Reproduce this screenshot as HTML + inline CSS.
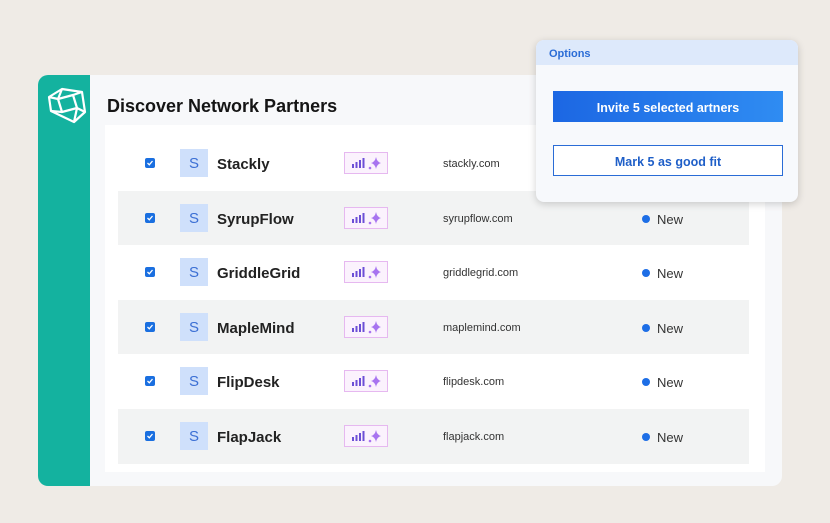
<!DOCTYPE html>
<html><head><style>
*{margin:0;padding:0;box-sizing:border-box}
body{width:830px;height:523px;background:#efebe6;font-family:"Liberation Sans",sans-serif;position:relative;overflow:hidden}
.card{position:absolute;left:38px;top:75px;width:744px;height:411px;background:#f7f8fa;border-radius:10px;overflow:hidden}
.side{position:absolute;left:0;top:0;width:52px;height:100%;background:#14b29f}
h1{position:absolute;left:107px;top:96px;font-size:18px;font-weight:bold;color:#151515}
.panel{position:absolute;left:105px;top:125px;width:660px;height:347px;background:#fff}
.row{position:absolute;left:118px;width:631px;height:54.6px}
.row.g{background:#f2f3f3}
.cb{position:absolute;left:27px;top:22px;width:10px;height:10px;background:#1a6fe0;border-radius:2px}
.cb svg{position:absolute;left:1px;top:1px}
.av{position:absolute;left:62px;top:13px;width:28px;height:28px;background:#cfe0fb;color:#3b6fd4;font-size:15px;text-align:center;line-height:30px}
.nm{position:absolute;left:99px;top:20px;font-size:15px;font-weight:bold;color:#222}
.bd{position:absolute;left:226px;top:16px;width:44px;height:22px;border:1px solid #e6b8f0;background:#fbf2fd}
.dm{position:absolute;left:325px;top:22px;font-size:11px;color:#333}
.nw{position:absolute;left:524px;top:21px;font-size:13px;color:#333}
.nw:before{content:"";display:inline-block;width:8px;height:8px;border-radius:50%;background:#1d6ee6;margin-right:7px;vertical-align:1px}
.pop{position:absolute;left:536px;top:40px;width:262px;height:162px;background:#f7f9fc;border-radius:8px;box-shadow:0 2px 8px rgba(0,0,0,.18);overflow:hidden}
.ph{height:25px;background:#dde9fb;color:#2a6cd6;font-size:11px;font-weight:bold;padding:8px 0 0 13px}
.b1{position:absolute;left:17px;top:51px;width:230px;height:31px;background:linear-gradient(90deg,#1c67e3,#2f8cf2);color:#fff;font-size:12.5px;font-weight:bold;text-align:center;line-height:35px}
.b2{position:absolute;left:17px;top:105px;width:230px;height:31px;background:#fff;border:1.5px solid #2a6cd6;color:#1f5fc8;font-size:12.5px;font-weight:bold;text-align:center;line-height:32px}
</style></head><body>
<div class="card"><div class="side"></div></div>
<svg style="position:absolute;left:40px;top:80px" width="50" height="50" viewBox="0 0 50 50" fill="none" stroke="#fff" stroke-width="2.2" stroke-linejoin="round">
<path d="M9 17 L22 9 L42 12 L45 32 L34 42 L11 31 Z"/>
<path d="M18 19 L33 15 L37 28 L22 32 Z"/>
<path d="M9 17 L18 19 M22 9 L18 19 M42 12 L33 15 M45 32 L37 28 M34 42 L37 28 M11 31 L22 32"/>
</svg>
<h1>Discover Network Partners</h1>
<div class="panel"></div>

<div class="row" style="top:136px"><div class="cb"><svg width="8" height="8"><path d="M1.5 4 L3.3 5.8 L6.5 2" stroke="#fff" stroke-width="1.3" fill="none"/></svg></div><div class="av">S</div><div class="nm">Stackly</div><div class="bd"><svg width="44" height="22"><g fill="#6c4fd6"><rect x="7" y="11" width="2" height="4"/><rect x="10.5" y="9" width="2" height="6"/><rect x="14" y="7" width="2" height="8"/><rect x="17.5" y="5" width="2" height="10"/></g><path d="M31 4 Q32 9 36 10 Q32 11 31 16 Q30 11 26 10 Q30 9 31 4Z" fill="#a874f0"/><circle cx="25" cy="15" r="1.3" fill="#a874f0"/></svg></div><div class="dm">stackly.com</div></div>
<div class="row g" style="top:190.6px"><div class="cb"><svg width="8" height="8"><path d="M1.5 4 L3.3 5.8 L6.5 2" stroke="#fff" stroke-width="1.3" fill="none"/></svg></div><div class="av">S</div><div class="nm">SyrupFlow</div><div class="bd"><svg width="44" height="22"><g fill="#6c4fd6"><rect x="7" y="11" width="2" height="4"/><rect x="10.5" y="9" width="2" height="6"/><rect x="14" y="7" width="2" height="8"/><rect x="17.5" y="5" width="2" height="10"/></g><path d="M31 4 Q32 9 36 10 Q32 11 31 16 Q30 11 26 10 Q30 9 31 4Z" fill="#a874f0"/><circle cx="25" cy="15" r="1.3" fill="#a874f0"/></svg></div><div class="dm">syrupflow.com</div><div class="nw">New</div></div>
<div class="row" style="top:245.2px"><div class="cb"><svg width="8" height="8"><path d="M1.5 4 L3.3 5.8 L6.5 2" stroke="#fff" stroke-width="1.3" fill="none"/></svg></div><div class="av">S</div><div class="nm">GriddleGrid</div><div class="bd"><svg width="44" height="22"><g fill="#6c4fd6"><rect x="7" y="11" width="2" height="4"/><rect x="10.5" y="9" width="2" height="6"/><rect x="14" y="7" width="2" height="8"/><rect x="17.5" y="5" width="2" height="10"/></g><path d="M31 4 Q32 9 36 10 Q32 11 31 16 Q30 11 26 10 Q30 9 31 4Z" fill="#a874f0"/><circle cx="25" cy="15" r="1.3" fill="#a874f0"/></svg></div><div class="dm">griddlegrid.com</div><div class="nw">New</div></div>
<div class="row g" style="top:299.8px"><div class="cb"><svg width="8" height="8"><path d="M1.5 4 L3.3 5.8 L6.5 2" stroke="#fff" stroke-width="1.3" fill="none"/></svg></div><div class="av">S</div><div class="nm">MapleMind</div><div class="bd"><svg width="44" height="22"><g fill="#6c4fd6"><rect x="7" y="11" width="2" height="4"/><rect x="10.5" y="9" width="2" height="6"/><rect x="14" y="7" width="2" height="8"/><rect x="17.5" y="5" width="2" height="10"/></g><path d="M31 4 Q32 9 36 10 Q32 11 31 16 Q30 11 26 10 Q30 9 31 4Z" fill="#a874f0"/><circle cx="25" cy="15" r="1.3" fill="#a874f0"/></svg></div><div class="dm">maplemind.com</div><div class="nw">New</div></div>
<div class="row" style="top:354.4px"><div class="cb"><svg width="8" height="8"><path d="M1.5 4 L3.3 5.8 L6.5 2" stroke="#fff" stroke-width="1.3" fill="none"/></svg></div><div class="av">S</div><div class="nm">FlipDesk</div><div class="bd"><svg width="44" height="22"><g fill="#6c4fd6"><rect x="7" y="11" width="2" height="4"/><rect x="10.5" y="9" width="2" height="6"/><rect x="14" y="7" width="2" height="8"/><rect x="17.5" y="5" width="2" height="10"/></g><path d="M31 4 Q32 9 36 10 Q32 11 31 16 Q30 11 26 10 Q30 9 31 4Z" fill="#a874f0"/><circle cx="25" cy="15" r="1.3" fill="#a874f0"/></svg></div><div class="dm">flipdesk.com</div><div class="nw">New</div></div>
<div class="row g" style="top:409px"><div class="cb"><svg width="8" height="8"><path d="M1.5 4 L3.3 5.8 L6.5 2" stroke="#fff" stroke-width="1.3" fill="none"/></svg></div><div class="av">S</div><div class="nm">FlapJack</div><div class="bd"><svg width="44" height="22"><g fill="#6c4fd6"><rect x="7" y="11" width="2" height="4"/><rect x="10.5" y="9" width="2" height="6"/><rect x="14" y="7" width="2" height="8"/><rect x="17.5" y="5" width="2" height="10"/></g><path d="M31 4 Q32 9 36 10 Q32 11 31 16 Q30 11 26 10 Q30 9 31 4Z" fill="#a874f0"/><circle cx="25" cy="15" r="1.3" fill="#a874f0"/></svg></div><div class="dm">flapjack.com</div><div class="nw">New</div></div>

<div class="pop"><div class="ph">Options</div><div class="b1">Invite 5 selected artners</div><div class="b2">Mark 5 as good fit</div></div>
</body></html>
